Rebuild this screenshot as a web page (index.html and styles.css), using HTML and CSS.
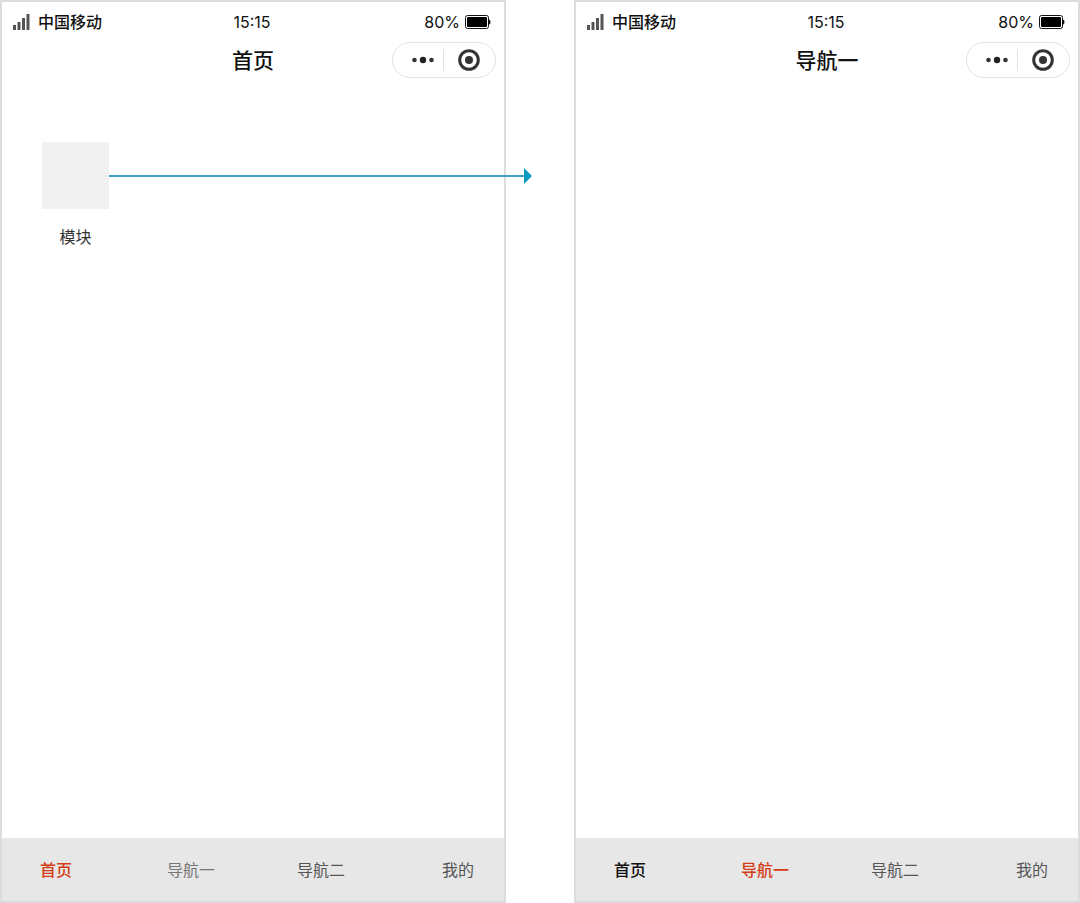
FILE: index.html
```html
<!DOCTYPE html>
<html lang="zh-CN">
<head>
<meta charset="utf-8">
<meta name="viewport" content="width=device-width, initial-scale=1">
<title>首页 / 导航一</title>
<link rel="stylesheet" href="styles.css">
</head>
<body>
<svg class="symbols" aria-hidden="true">
  <symbol id="signal" viewBox="0 0 17 16">
    <path d="M0 11h3v5H0zM4.5 8h3v8h-3zM9 4h3v12H9zM13.5 0h3v16h-3z" fill="#555"/>
  </symbol>
  <symbol id="battery" viewBox="0 0 26 14">
    <rect x="0.5" y="0.5" width="23" height="13" rx="2" fill="#fff" stroke="#111"/>
    <rect x="2" y="2" width="20" height="10" rx="1" fill="#000"/>
    <path d="M24 4.5q1.5 0 1.5 2.5T24 9.500z" fill="#111"/>
  </symbol>
  <symbol id="dots" viewBox="0 0 22 8">
    <circle cx="2.500" cy="4" r="2.300" fill="#333"/>
    <circle cx="11" cy="4" r="3.200" fill="#222"/>
    <circle cx="19.500" cy="4" r="2.300" fill="#333"/>
  </symbol>
  <symbol id="target" viewBox="0 0 22 22">
    <circle cx="11" cy="11" r="9.300" fill="none" stroke="#333" stroke-width="3"/>
    <circle cx="11" cy="11" r="4" fill="#333"/>
  </symbol>
</svg>
<main class="board">
  <section class="phone">
    <div class="status">
      <span class="carrier"><svg class="signal"><use href="#signal"/></svg>中国移动</span>
      <span class="time">15:15</span>
      <span class="power">80%<svg class="battery"><use href="#battery"/></svg></span>
    </div>
    <header class="titlebar">
      <h1 class="title">首页</h1>
      <div class="capsule">
        <button class="capsule-button" aria-label="更多"><svg class="dots"><use href="#dots"/></svg></button>
        <button class="capsule-button" aria-label="关闭"><svg class="target"><use href="#target"/></svg></button>
      </div>
    </header>
    <div class="content">
      <a class="module" href="#nav-one"><span class="tile"></span>模块</a>
    </div>
    <nav class="tabs">
      <button class="tab active">首页</button>
      <button class="tab soft">导航一</button>
      <button class="tab">导航二</button>
      <button class="tab">我的</button>
    </nav>
  </section>
  <section class="phone" id="nav-one">
    <div class="status">
      <span class="carrier"><svg class="signal"><use href="#signal"/></svg>中国移动</span>
      <span class="time">15:15</span>
      <span class="power">80%<svg class="battery"><use href="#battery"/></svg></span>
    </div>
    <header class="titlebar">
      <h1 class="title">导航一</h1>
      <div class="capsule">
        <button class="capsule-button" aria-label="更多"><svg class="dots"><use href="#dots"/></svg></button>
        <button class="capsule-button" aria-label="关闭"><svg class="target"><use href="#target"/></svg></button>
      </div>
    </header>
    <div class="content"></div>
    <nav class="tabs">
      <button class="tab strong">首页</button>
      <button class="tab active">导航一</button>
      <button class="tab">导航二</button>
      <button class="tab">我的</button>
    </nav>
  </section>
  <div class="arrow"></div>
</main>
</body>
</html>
```
FILE: styles.css
```css
* {
  box-sizing: border-box;
}

body {
  margin: 0;
  background: #fff;
  color: #111;
  font-family: Inter, "Noto Sans CJK SC", sans-serif;
  font-size: 16px;
  line-height: 24px;
}

.symbols {
  position: absolute;
  width: 0;
  height: 0;
}

.board {
  position: relative;
  display: grid;
  grid-template-columns: 1fr 1fr;
  gap: 68px;
  min-height: 100vh;
}

.phone {
  display: flex;
  flex-direction: column;
  border: 2px solid #dcdcdc;
}

.status,
.titlebar {
  display: grid;
  grid-template-columns: 1fr auto 1fr;
  align-items: center;
}

.status {
  padding: 8px 13px 0 11px;
}

.carrier,
.power {
  display: flex;
  align-items: center;
}

.carrier {
  gap: 8px;
  font-weight: 500;
}

.power {
  gap: 5px;
  justify-content: flex-end;
}

.signal {
  width: 17px;
  height: 16px;
}

.battery {
  width: 26px;
  height: 14px;
}

.titlebar {
  padding: 8px 8px 0;
}

.title {
  grid-column: 2;
  margin: 0;
  padding-top: 2px;
  font-size: 21px;
  font-weight: 500;
  line-height: 34px;
}

.capsule {
  display: grid;
  grid-template-columns: 1fr 1fr;
  justify-self: end;
  width: 104px;
  height: 36px;
  padding: 6px 0;
  border: 1px solid #e2e2e2;
  border-radius: 18px;
}

.capsule-button {
  display: flex;
  align-items: center;
  justify-content: center;
  padding: 0;
  border: 0;
  background: none;
}

.capsule-button:first-child {
  padding-left: 10px;
  border-right: 1px solid #e2e2e2;
}

.capsule-button:last-child {
  padding-right: 2px;
}

.dots {
  width: 22px;
  height: 8px;
}

.target {
  width: 22px;
  height: 22px;
}

.content {
  flex: 1;
  padding: 64px 40px;
}

.module {
  display: inline-flex;
  flex-direction: column;
  align-items: center;
  gap: 16px;
  color: #333;
  text-decoration: none;
}

.tile {
  width: 67px;
  height: 67px;
  background: #f1f1f1;
}

.tabs {
  display: grid;
  grid-template-columns: 127fr 130fr 145fr 32fr;
  padding: 20px 30px 19px 38px;
  background: #e7e7e7;
}

.tab {
  padding: 0;
  border: 0;
  background: none;
  color: #555;
  font: inherit;
  text-align: left;
  white-space: nowrap;
}

.soft {
  color: #777;
}

.strong {
  color: #111;
  font-weight: 500;
}

.active {
  color: #d43d17;
  font-weight: 500;
}

.arrow {
  position: absolute;
  top: 168px;
  left: 109px;
  right: calc(50% + 8px);
  display: flex;
  align-items: center;
}

.arrow::before {
  content: "";
  flex: 1;
  height: 2px;
  background: #3ba3bf;
}

.arrow::after {
  content: "";
  border: 8px solid transparent;
  border-right-width: 0;
  border-left-color: #0e9bc2;
}
```
